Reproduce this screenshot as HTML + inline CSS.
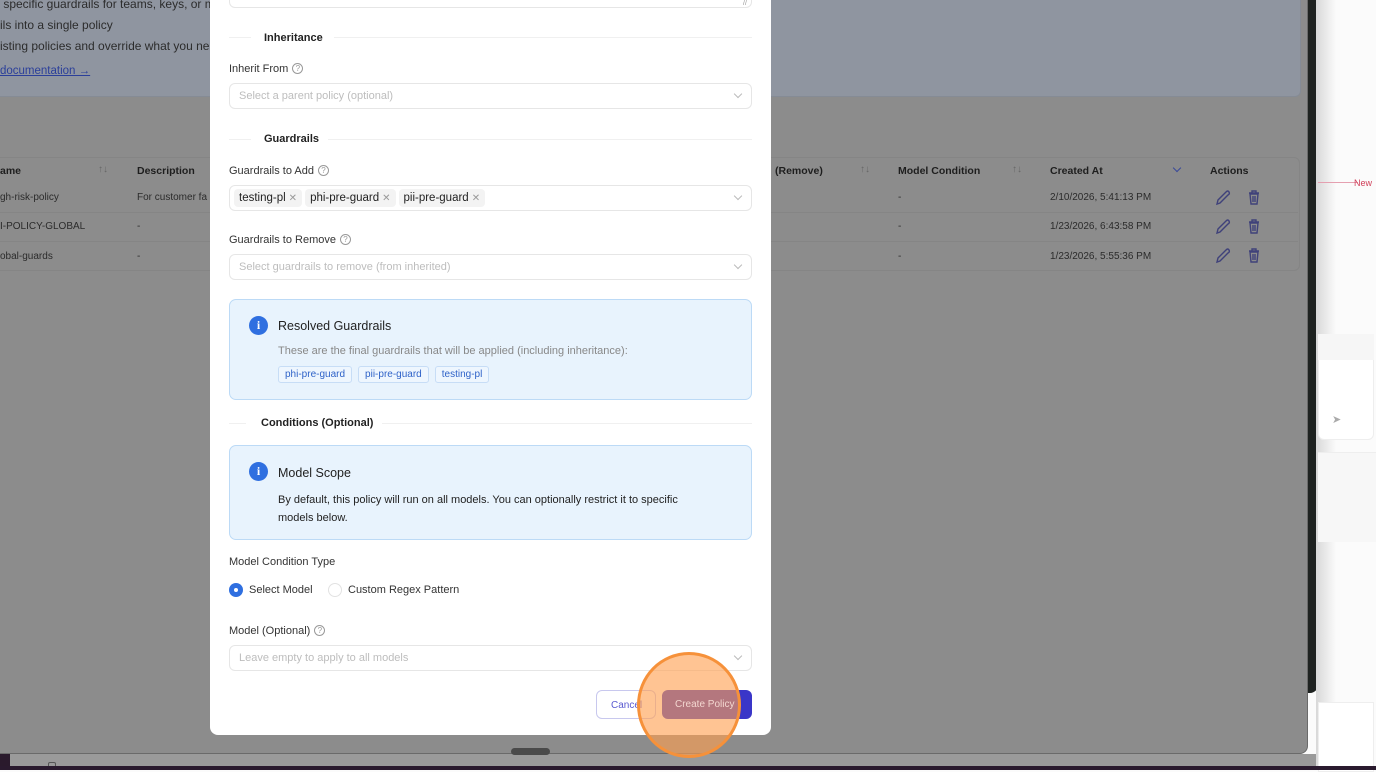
<!DOCTYPE html>
<html><head><meta charset="utf-8"><style>
*{box-sizing:border-box;margin:0;padding:0}
body{width:1376px;height:770px;overflow:hidden;position:relative;background:#fbfbfb;font-family:"Liberation Sans",sans-serif;font-size:12px;color:#222}
.a{position:absolute}
.ov{left:0;top:0;width:1308px;height:754px;background:#8c8c8c;border-bottom-right-radius:8px;border-right:1px solid #6a6a6a;border-bottom:1px solid #6a6a6a}
.t{font-size:10px;color:#2b2b2b}
.hd{font-weight:bold;font-size:10.5px;color:#1e1e1e}
.m{left:210px;top:-10px;width:561px;height:745px;background:#fff;border-radius:0 0 8px 8px}
.sec{font-weight:bold;font-size:11px;color:#222}
.ln{height:1px;background:#f0f0f0}
.lbl{font-size:11px;color:#333}
.inp{left:229px;width:523px;height:26px;border:1px solid #e6e6e6;border-radius:6px;background:#fff;color:#bdbdbd;font-size:11px;padding:6px 9px}
.chev{position:absolute;right:10px;top:7px;width:6px;height:6px;border-right:1px solid #bbb;border-bottom:1px solid #bbb;transform:rotate(45deg)}
.q{display:inline-block;width:11px;height:11px;border:1px solid #999;border-radius:50%;font-size:8px;line-height:9px;text-align:center;color:#999;vertical-align:1px;margin-left:4px}
.tag{display:inline-block;background:#f3f3f3;border-radius:4px;padding:3px 5px;font-size:11.5px;color:#222;margin-right:3px}
.tag i{font-style:normal;color:#999;font-size:10px;margin-left:3px}
.box{left:229px;width:523px;background:#e8f3fd;border:1px solid #bcdaf6;border-radius:7px}
.ic{position:absolute;left:19px;width:19px;height:19px;border-radius:50%;background:#2f6fe0;color:#fff;font-weight:bold;font-size:12px;text-align:center;line-height:19px;font-family:"Liberation Serif",serif}
.ch{display:inline-block;border:1px solid #c7ddf6;background:#eef6fe;color:#2e62c8;font-size:10px;padding:2px 6px;border-radius:3px;margin-right:6px}
</style></head><body>
<div class="a" style="left:1300px;top:0;width:18px;height:693px;background:#1e2220;border-radius:0 0 8px 0"></div>
<div class="a" style="left:1316px;top:0;width:60px;height:770px;background:linear-gradient(90deg,#d8d8d8,#fbfbfb 20px)"></div>
<div class="a" style="left:1318px;top:182px;width:40px;height:1px;background:#e5a0b0"></div>
<div class="a" style="left:1354px;top:178px;font-size:9px;color:#d0405a">New</div>
<div class="a" style="left:1318px;top:334px;width:56px;height:106px;border:1px solid #eee;border-radius:6px;background:#fff"></div>
<div class="a" style="left:1318px;top:334px;width:56px;height:26px;background:#f6f6f6"></div>
<div class="a" style="left:1332px;top:413px;color:#aaa;font-size:11px">➤</div>
<div class="a" style="left:1318px;top:452px;width:58px;height:90px;background:#f7f7f7;border-top:1px solid #eee"></div>
<div class="a" style="left:1318px;top:702px;width:56px;height:70px;border:1px solid #eee;background:#fff"></div>

<div class="a ov"></div>
<div class="a" style="left:0;top:0;width:1301px;height:97px;background:#8f95a0;border-right:1px solid #858b95;border-bottom:1px solid #858b95;border-bottom-right-radius:6px"></div>
<div class="a" style="left:0;top:-6px;font-size:12px;color:#2c2c2c;line-height:21px">&nbsp;specific guardrails for teams, keys, or m<br>ils into a single policy<br>isting policies and override what you nee</div>
<div class="a" style="left:0;top:65px;font-size:11.5px;color:#2b3f9a;text-decoration:underline">documentation →</div>
<div class="a" style="left:0;top:157px;width:1300px;height:114px;border:1px solid #858585;border-left:none;border-radius:0 6px 6px 0"></div>
<div class="a hd" style="left:0;top:165px">ame</div><div class="a" style="left:98px;top:164px;color:#666;font-size:10px">↑↓</div>
<div class="a hd" style="left:137px;top:165px">Description</div>
<div class="a hd" style="left:775px;top:165px">(Remove)</div><div class="a" style="left:860px;top:164px;color:#666;font-size:10px">↑↓</div>
<div class="a hd" style="left:898px;top:165px">Model Condition</div><div class="a" style="left:1012px;top:164px;color:#666;font-size:10px">↑↓</div>
<div class="a hd" style="left:1050px;top:165px">Created At</div><div class="a" style="left:1174px;top:165px;width:6px;height:6px;border-right:1px solid #3a4a9a;border-bottom:1px solid #3a4a9a;transform:rotate(45deg)"></div>
<div class="a hd" style="left:1210px;top:165px">Actions</div>
<div class="a" style="left:0;top:212px;width:1298px;height:1px;background:#858585"></div>
<div class="a" style="left:0;top:241px;width:1298px;height:1px;background:#858585"></div>
<div class="a t" style="left:0;top:192px">gh-risk-policy</div><div class="a t" style="left:137px;top:192px">For customer fa</div>
<div class="a t" style="left:0;top:221px">I-POLICY-GLOBAL</div><div class="a t" style="left:137px;top:221px">-</div>
<div class="a t" style="left:0;top:251px">obal-guards</div><div class="a t" style="left:137px;top:251px">-</div>
<div class="a t" style="left:898px;top:192px">-</div><div class="a t" style="left:1050px;top:192px">2/10/2026, 5:41:13 PM</div>
<div class="a t" style="left:898px;top:221px">-</div><div class="a t" style="left:1050px;top:221px">1/23/2026, 6:43:58 PM</div>
<div class="a t" style="left:898px;top:251px">-</div><div class="a t" style="left:1050px;top:251px">1/23/2026, 5:55:36 PM</div>
<svg class="a" style="left:1214px;top:189px" width="60" height="76" fill="none" stroke="#3f417a" stroke-width="1.4">
<g><path d="M3 15 L4 11 L12 3 Q14 1 15 3 Q16 5 14 6 L6 14 Z"/><path d="M35 4h10M38 4v-2h4v2M36 5h8l-1 10h-6z M39 7v6M41 7v6"/></g>
<g transform="translate(0,29)"><path d="M3 15 L4 11 L12 3 Q14 1 15 3 Q16 5 14 6 L6 14 Z"/><path d="M35 4h10M38 4v-2h4v2M36 5h8l-1 10h-6z M39 7v6M41 7v6"/></g>
<g transform="translate(0,58)"><path d="M3 15 L4 11 L12 3 Q14 1 15 3 Q16 5 14 6 L6 14 Z"/><path d="M35 4h10M38 4v-2h4v2M36 5h8l-1 10h-6z M39 7v6M41 7v6"/></g>
</svg>
<div class="a" style="left:0;top:754px;width:1316px;height:12px;background:#9a9a9a"></div>
<div class="a" style="left:0;top:754px;width:10px;height:16px;background:#2a1a2c"></div>
<div class="a" style="left:48px;top:762px;width:8px;height:8px;border:1px solid #555;border-radius:2px"></div>
<div class="a" style="left:0;top:766px;width:1376px;height:4px;background:#2a1a2e"></div>
<div class="a" style="left:511px;top:748px;width:39px;height:7px;border-radius:4px;background:#4a4a4a"></div>

<div class="a m"></div>
<div class="a" style="left:229px;top:-10px;width:523px;height:18px;border:1px solid #e6e6e6;border-radius:6px"></div>
<div class="a" style="left:743px;top:0;color:#999;font-size:7px">//</div>

<div class="a ln" style="left:229px;top:37px;width:22px"></div><div class="a sec" style="left:264px;top:32px">Inheritance</div><div class="a ln" style="left:334px;top:37px;width:418px"></div>
<div class="a lbl" style="left:229px;top:63px">Inherit From<span class="q">?</span></div>
<div class="a inp" style="top:83px">Select a parent policy (optional)<span class="chev"></span></div>

<div class="a ln" style="left:229px;top:139px;width:22px"></div><div class="a sec" style="left:264px;top:133px">Guardrails</div><div class="a ln" style="left:328px;top:139px;width:424px"></div>
<div class="a lbl" style="left:229px;top:165px">Guardrails to Add<span class="q">?</span></div>
<div class="a inp" style="top:185px;padding:3px 4px;color:#222"><span class="tag">testing-pl<i>✕</i></span><span class="tag">phi-pre-guard<i>✕</i></span><span class="tag">pii-pre-guard<i>✕</i></span><span class="chev"></span></div>
<div class="a lbl" style="left:229px;top:234px">Guardrails to Remove<span class="q">?</span></div>
<div class="a inp" style="top:254px">Select guardrails to remove (from inherited)<span class="chev"></span></div>

<div class="a box" style="top:299px;height:101px">
<div class="ic" style="top:16px">i</div>
<div class="a" style="left:48px;top:19px;font-size:12.5px;color:#222">Resolved Guardrails</div>
<div class="a" style="left:48px;top:45px;font-size:11px;color:#888">These are the final guardrails that will be applied (including inheritance):</div>
<div class="a" style="left:48px;top:66px;white-space:nowrap"><span class="ch">phi-pre-guard</span><span class="ch">pii-pre-guard</span><span class="ch">testing-pl</span></div>
</div>

<div class="a ln" style="left:229px;top:423px;width:17px"></div><div class="a sec" style="left:261px;top:417px">Conditions (Optional)</div><div class="a ln" style="left:382px;top:423px;width:370px"></div>

<div class="a box" style="top:445px;height:95px">
<div class="ic" style="top:16px">i</div>
<div class="a" style="left:48px;top:20px;font-size:12.5px;color:#222">Model Scope</div>
<div class="a" style="left:48px;top:45px;font-size:11px;color:#222;line-height:18px;width:435px">By default, this policy will run on all models. You can optionally restrict it to specific models below.</div>
</div>

<div class="a lbl" style="left:229px;top:556px">Model Condition Type</div>
<div class="a" style="left:229px;top:583px;width:14px;height:14px;border-radius:50%;background:#2f6fe0"></div>
<div class="a" style="left:234px;top:588px;width:4px;height:4px;border-radius:50%;background:#fff"></div>
<div class="a lbl" style="left:249px;top:584px">Select Model</div>
<div class="a" style="left:328px;top:583px;width:14px;height:14px;border-radius:50%;border:1px solid #e2e2e2"></div>
<div class="a lbl" style="left:348px;top:584px">Custom Regex Pattern</div>
<div class="a lbl" style="left:229px;top:625px">Model (Optional)<span class="q">?</span></div>
<div class="a inp" style="top:645px">Leave empty to apply to all models<span class="chev"></span></div>

<div class="a" style="left:596px;top:690px;width:60px;height:29px;border:1px solid #c8c8ee;border-radius:6px;color:#5a5ad0;font-size:10px;padding-top:9px;padding-left:14px">Cancel</div>
<div class="a" style="left:662px;top:690px;width:90px;height:29px;border-radius:6px;background:#3a36c8"></div>
<div class="a" style="left:637px;top:652px;width:104px;height:106px;border-radius:50%;background:rgba(255,160,80,.62);border:3px solid #f6913a"></div>
<div class="a" style="left:675px;top:699px;font-size:10px;color:#f3d7d0">Create Policy</div>
</body></html>
